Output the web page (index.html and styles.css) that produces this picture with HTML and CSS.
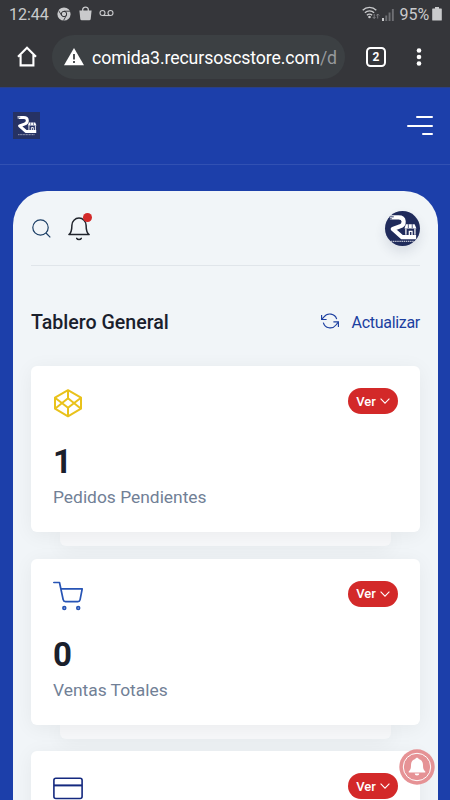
FILE: index.html
```html
<!DOCTYPE html>
<html lang="es">
<head>
<meta charset="utf-8">
<meta name="viewport" content="width=device-width">
<title>Tablero General</title>
<link rel="stylesheet" href="styles.css">
</head>
<body>
<svg class="defs" width="0" height="0">
  <symbol id="brand" viewBox="0 0 36 36">
    <path d="M5 6.500h9c6.500 0 7 7.800 1 9.500l-7 2.500 9.500 8.300H32" fill="none" stroke="#fff" stroke-width="4.300" stroke-linejoin="round"/>
    <path d="M4 6h5M3 8h4" stroke="#263264" stroke-width="1"/>
    <path d="M21.500 13.500h9l1.800 4.500H20z" fill="#fff"/>
    <path d="M24 13.500v4M28 13.500v4" stroke="#263264" stroke-width=".8"/>
    <path d="M21.500 18v6.500M30.800 18v6.500M25 25v-4h2.800v4" fill="none" stroke="#fff" stroke-width="1.300"/>
    <path d="M6 31.200h24" stroke="#fff" stroke-width="1.200" stroke-dasharray="1.500 .7" opacity=".7"/>
  </symbol>
  <symbol id="chevron" viewBox="0 0 10 6"><path d="M.6.7 5 5.100 9.400.7" fill="none" stroke="#fff" stroke-width="1.100"/></symbol>
</svg>

<div class="statusbar">
  <span class="clock">12:44</span>
  <svg class="s-chrome" width="14" height="14" viewBox="0 0 14 14"><circle cx="7" cy="7" r="6.600" fill="#c9cacc"/><circle cx="7" cy="7" r="2.700" fill="none" stroke="#35363a" stroke-width="1"/><path d="M7 4.200h6M4.600 8.400 1.600 3.500M9.400 8.400l-2.800 5" stroke="#35363a" stroke-width=".9"/></svg>
  <svg class="s-bag" width="13" height="15" viewBox="0 0 13 15"><path d="M.4 4.500h12.200l-.9 8.500a1.500 1.500 0 0 1-1.500 1.300H2.800A1.500 1.500 0 0 1 1.300 13z" fill="#c9cacc"/><path d="M3.700 5V3.500a2.800 2.300 0 0 1 5.600 0V5" fill="none" stroke="#c9cacc" stroke-width="1.300"/></svg>
  <svg class="s-vm" width="15" height="8" viewBox="0 0 15 8"><g fill="none" stroke="#c9cacc" stroke-width="1.100"><circle cx="3.500" cy="4" r="2.500"/><circle cx="11.500" cy="4" r="2.500"/><path d="M3.500 6.500h8"/></g></svg>
  <span class="spacer"></span>
  <svg class="s-wifi" width="18" height="13" viewBox="0 0 18 13"><g fill="none" stroke="#c9cacc" stroke-width="1.300"><path d="M.7 4.300a9.500 9.500 0 0 1 13.600 0M2.900 6.800a6.500 6.500 0 0 1 9.200 0M4.900 9.200a3.600 3.600 0 0 1 5.200 0"/></g><circle cx="7.500" cy="11" r="1.300" fill="#c9cacc"/><path d="M12.200 8v4.500m-1.500-1.500 1.500 1.500 1.300-1.500M15.700 12.500V8m-1.300 1.500L15.700 8l1.500 1.500" fill="none" stroke="#85868a" stroke-width=".9"/></svg>
  <svg class="s-signal" width="12" height="13" viewBox="0 0 12 13"><path d="M0 10h2v3H0z" fill="#c9cacc"/><path d="M3.300 7.500h1.900V13H3.300zM6.600 4.500h1.900V13H6.600zM9.900 1h1.900v12H9.900z" fill="#6e6f73"/></svg>
  <span class="battery-text">95%</span>
  <svg class="s-bat" width="10" height="14" viewBox="0 0 10 14"><path d="M3 0h4v1.500h2.200a.6.6 0 0 1 .6.6v10.800a.6.6 0 0 1-.6.6H.8a.6.6 0 0 1-.6-.6V2.100a.6.6 0 0 1 .6-.6H3z" fill="#c9cacc"/></svg>
</div>

<div class="browserbar">
  <svg class="home" width="20" height="21" viewBox="0 0 20 21"><path d="M1 10.800 10 1.700l9 9.100M3.600 9v10.400h12.800V9" fill="none" stroke="#fff" stroke-width="2.100"/></svg>
  <div class="address">
    <svg width="20" height="18" viewBox="0 0 20 18"><path d="M10 0l10 17.300H0z" fill="#fff"/><path d="M10 6v5.500M10 13v2" stroke="#3c4043" stroke-width="1.800"/></svg>
    <span class="url">comida3.recursoscstore.com<span class="path">/d</span></span>
  </div>
  <span class="tabs">2</span>
  <svg class="dots" width="6" height="20" viewBox="0 0 6 20"><g fill="#fff"><circle cx="3" cy="3.500" r="2.300"/><circle cx="3" cy="10" r="2.300"/><circle cx="3" cy="16.500" r="2.300"/></g></svg>
</div>

<header class="site-header">
  <span class="logo"><svg width="25" height="25"><use href="#brand"/></svg></span>
  <span class="menu"><i class="m1"></i><i class="m2"></i><i class="m3"></i></span>
</header>

<main class="panel">
  <div class="topbar">
    <svg class="search" width="19" height="19" viewBox="0 0 19 19"><g fill="none" stroke="#1c3f66" stroke-width="1.200"><circle cx="8.500" cy="8.500" r="7.700"/><path d="m14 14 4.300 4.300"/></g></svg>
    <span class="bell"><svg width="22" height="25" viewBox="0 0 22 25"><g fill="none" stroke="#20242c" stroke-width="1.500" stroke-linejoin="round" stroke-linecap="round"><path d="M.9 18.500c2.600-1.800 3-5 3-9.300a7.100 7.100 0 0 1 14.200 0c0 4.300.4 7.500 3 9.300z"/><path d="M8.700 22.300c.8 1.500 3.800 1.500 4.600 0"/></g></svg><i class="badge"></i></span>
    <span class="spacer"></span>
    <span class="avatar"><svg width="35" height="35"><use href="#brand"/></svg></span>
  </div>

  <div class="heading">
    <h1>Tablero General</h1>
    <a class="refresh"><svg width="18" height="16" viewBox="0 0 18 16"><g fill="none" stroke="#1c3fa0" stroke-width="1.150"><path d="M.6 2v4.500h5M17.400 14V8.800h-5"/><path d="M.9 6.200 3 4a7.200 7.200 0 0 1 12.700 2.200M17.100 9.300 15 12A7.200 7.200 0 0 1 2.300 9.600"/></g></svg><span>Actualizar</span></a>
  </div>

  <section class="stack">
    <article class="card">
      <div class="card-head">
        <svg class="icon" width="30" height="30" viewBox="0 0 30 30"><g fill="none" stroke="#e9c21b" stroke-width="2" stroke-linejoin="round"><path d="M15 2.200 28 9.700v11L15 28.300l-13-7.600v-11z"/><path d="M15 2.200v8M15 28.300v-8.500M2 9.700l13 10.100 13-10.100M2 20.700l13-10.500 13 10.500"/></g></svg>
        <a class="pill">Ver<svg width="10" height="6"><use href="#chevron"/></svg></a>
      </div>
      <div class="value">1</div>
      <div class="label">Pedidos Pendientes</div>
    </article>
    <div class="under"></div>
  </section>

  <section class="stack">
    <article class="card">
      <div class="card-head">
        <svg class="icon" width="30" height="30" viewBox="0 0 30 30"><g fill="none" stroke="#2754b5" stroke-width="1.700" stroke-linejoin="round" stroke-linecap="round"><path d="M.8 1.500h5.700l3.700 17.200a2.300 2.300 0 0 0 2.300 1.900h12.300a2.300 2.300 0 0 0 2.300-1.900l2.100-10.900H8"/><circle cx="11.300" cy="27" r="1.400"/><circle cx="25.200" cy="27" r="1.400"/></g></svg>
        <a class="pill">Ver<svg width="10" height="6"><use href="#chevron"/></svg></a>
      </div>
      <div class="value">0</div>
      <div class="label">Ventas Totales</div>
    </article>
    <div class="under"></div>
  </section>

  <section class="stack">
    <article class="card">
      <div class="card-head">
        <svg class="icon" width="30" height="30" viewBox="0 0 30 30"><g fill="none" stroke="#14297f" stroke-width="1.600"><rect x=".9" y="5.200" width="28.200" height="20.300" rx="2"/><path d="M1 12.400h28" stroke-width="2"/></g></svg>
        <a class="pill">Ver<svg width="10" height="6"><use href="#chevron"/></svg></a>
      </div>
    </article>
  </section>
</main>

<div class="notify"><svg width="36" height="36" viewBox="0 0 36 36"><circle cx="18" cy="18" r="17.700" fill="#e58d90"/><circle cx="18" cy="18" r="13.700" fill="none" stroke="#fff" stroke-width="1"/><path d="M18 8.700c1 0 1.600.6 1.700 1.400 3 .8 4.300 3.200 4.300 6 0 3.500.5 5 2.300 6.300v1H9.700v-1C11.500 21.100 12 19.600 12 16.100c0-2.800 1.300-5.200 4.300-6 .1-.8.700-1.400 1.700-1.400zM15.700 24.500h4.600a2.300 2 0 0 1-4.600 0z" fill="#fff"/></svg></div>
</body>
</html>
```
FILE: styles.css
```css
* { box-sizing: border-box; }
html, body { height: 100%; overflow: hidden; }
body {
  display: flex;
  flex-direction: column;
  margin: 0;
  background: #1c3faa;
  font-family: Roboto, "Liberation Sans", sans-serif;
  color: #1a202c;
}
svg { display: block; flex: none; }
.defs { position: absolute; }
i { display: block; }
.spacer { flex: 1; }

.statusbar {
  display: flex;
  flex: none;
  align-items: center;
  height: 28px;
  padding: 0 8px 0 9px;
  background: #35363a;
  color: #c9cacc;
  font-size: 16px;
}
.clock { width: 41px; letter-spacing: -.05px; }
.s-chrome { margin-left: 7px; }
.s-bag { margin: -2px 0 0 8px; }
.s-vm { margin: -3px 0 0 7px; }
.s-wifi { margin: -4px 0 0; }
.s-signal { margin: 0 6px 0 2px; }
.battery-text { letter-spacing: -.1px; margin-right: 3px; }

.browserbar {
  display: flex;
  flex: none;
  align-items: center;
  height: 60px;
  padding: 0 28px 2px 17px;
  background: #35363a;
  border-bottom: 1px solid #2b3f86;
}
.home { margin-right: 15px; }
.address {
  display: flex;
  align-items: center;
  width: 293px;
  height: 44px;
  padding-left: 12px;
  border-radius: 22px;
  background: #3c4043;
  color: #fff;
}
.url { margin: 2px 0 0 8px; font-size: 17.700px; letter-spacing: -.11px; white-space: nowrap; }
.path { color: #96999c; }
.tabs {
  width: 20px;
  height: 20px;
  margin: 0 30px 0 21px;
  border: 2px solid #fff;
  border-radius: 4.500px;
  color: #fff;
  font-size: 12px;
  font-weight: 700;
  line-height: 16px;
  text-align: center;
}

.site-header {
  display: flex;
  flex: none;
  align-items: center;
  justify-content: space-between;
  height: 77px;
  padding: 0 17px 1px 13px;
  border-bottom: 1px solid #3151b3;
}
.logo { padding: 1px; background: #263264; }
.menu { display: grid; justify-items: end; gap: 6.500px; }
.menu i { height: 2px; background: #fff; border-radius: 1px; }
.m1 { width: 17px; }
.m2 { width: 26px; }
.m3 { width: 11px; }

.panel {
  flex: 1;
  min-height: 0;
  overflow: hidden;
  margin: 26px 12px 0 13px;
  padding: 0 18px;
  border-radius: 34px 34px 0 0;
  background: #f1f5f8;
}
.topbar {
  display: flex;
  align-items: center;
  height: 75px;
  border-bottom: 1px solid #e0e5ea;
}
.search { margin-left: 1px; }
.bell { position: relative; margin-left: 17px; }
.badge {
  position: absolute;
  top: -3px;
  right: -2px;
  width: 9px;
  height: 9px;
  border-radius: 50%;
  background: #d32929;
}
.avatar {
  width: 35px;
  height: 35px;
  border-radius: 50%;
  background: #202b5b;
  box-shadow: 0 6px 12px rgba(40, 50, 80, .12);
}
.avatar svg { border-radius: 50%; }

.heading {
  display: flex;
  align-items: center;
  justify-content: space-between;
  height: 100px;
  padding-top: 13px;
}
h1 { margin: 0; font-size: 19.600px; font-weight: 500; line-height: 24px; }
.refresh { display: flex; align-items: center; gap: 13px; color: #1c3fa0; font-size: 16px; letter-spacing: -.3px; }
.refresh svg { margin-top: -4px; }

.stack { height: 192.500px; }
.card {
  position: relative;
  height: 166px;
  padding: 22px 22px 0;
  border-radius: 6px;
  background: #fff;
  box-shadow: 0 3px 20px rgba(0, 0, 0, .055);
}
.under {
  height: 14px;
  margin: 0 29px;
  border-radius: 0 0 6px 6px;
  background: #f7f8fa;
  box-shadow: 0 3px 20px rgba(0, 0, 0, .06);
}
.card-head { display: flex; justify-content: space-between; align-items: flex-start; }
.pill {
  display: flex;
  align-items: center;
  justify-content: center;
  gap: 4px;
  width: 50px;
  height: 26px;
  border-radius: 13px;
  background: #d32929;
  color: #fff;
  font-size: 13px;
  font-weight: 500;
}
.value { margin-top: 25px; font-size: 33px; font-weight: 700; line-height: 38px; }
.label { margin-top: 5px; color: #718096; font-size: 17.400px; line-height: 22px; }

.notify { position: absolute; left: 399px; top: 749px; opacity: .95; }
```
